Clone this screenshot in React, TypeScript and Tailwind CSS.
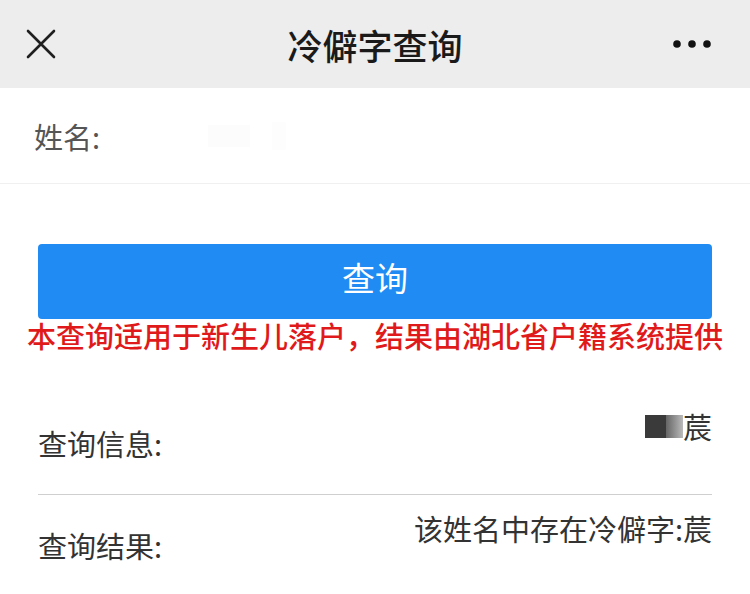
const font = { fontFamily: '"Noto Sans CJK SC", "Noto Sans", sans-serif' };

function CloseIcon() {
    return (
        <svg width="30" height="30" viewBox="0 0 30 30" className="text-[#1f1f1f]">
            <path d="M2 2 L28 28 M28 2 L2 28" stroke="currentColor" strokeWidth="2.6" strokeLinecap="round" fill="none" />
        </svg>
    );
}

function MoreIcon() {
    return (
        <svg width="40" height="10" viewBox="0 0 40 10" className="text-[#111]">
            <circle cx="5" cy="5" r="3.8" fill="currentColor" />
            <circle cx="20" cy="5" r="3.8" fill="currentColor" />
            <circle cx="35" cy="5" r="3.8" fill="currentColor" />
        </svg>
    );
}

export default function App() {
    return (
        <div className="min-h-[594px] w-[750px] overflow-hidden bg-white" style={font}>
            {/* nav bar */}
            <div className="grid h-[88px] grid-cols-[1fr_auto_1fr] items-center bg-[#ededed] pl-[26px] pr-[38px]">
                <div className="flex">
                    <CloseIcon />
                </div>
                <h1 className="pl-[12px] text-[35px] font-medium leading-none text-[#1a1a1a]">冷僻字查询</h1>
                <div className="flex justify-end">
                    <MoreIcon />
                </div>
            </div>

            {/* name input */}
            <div className="flex h-[96px] items-center border-b border-[#f0f0f0] px-[34px]">
                <span className="text-[29px] leading-[40px] text-[#555]">姓名:</span>
                <div className="ml-[108px] flex items-center gap-[22px]">
                    <span className="h-[22px] w-[42px] bg-[#fcfcfc]" />
                    <span className="h-[28px] w-[14px] bg-[#fdfdfd]" />
                </div>
            </div>

            {/* query button */}
            <div className="px-[38px] pt-[60px]">
                <button className="flex h-[75px] w-full items-center justify-center rounded-[4px] bg-[#1f8bf3] pb-[8px] text-[33px] text-white">
                    查询
                </button>
            </div>
            <p className="text-center text-[29px] font-medium leading-[32px] text-[#e01a1a]">
                本查询适用于新生儿落户，结果由湖北省户籍系统提供
            </p>

            {/* results */}
            <div className="px-[38px]">
                <div className="flex h-[144px] items-start justify-between border-b border-[#cfcfcf]">
                    <span className="mt-[72px] text-[29px] leading-[40px] text-[#333]">查询信息:</span>
                    <span className="mt-[55px] flex items-center text-[29px] leading-[40px] text-[#333]">
                        <span className="h-[23px] w-[21px] bg-[#3a3a3a]" />
                        <span className="h-[23px] w-[17px] bg-gradient-to-r from-[#666] to-[#bbb]" />
                        莀
                    </span>
                </div>
                <div className="flex items-start justify-between">
                    <span className="mt-[30px] text-[29px] leading-[40px] text-[#333]">查询结果:</span>
                    <span className="mt-[13px] text-[29px] leading-[40px] text-[#333]">该姓名中存在冷僻字:莀</span>
                </div>
            </div>
        </div>
    );
}
